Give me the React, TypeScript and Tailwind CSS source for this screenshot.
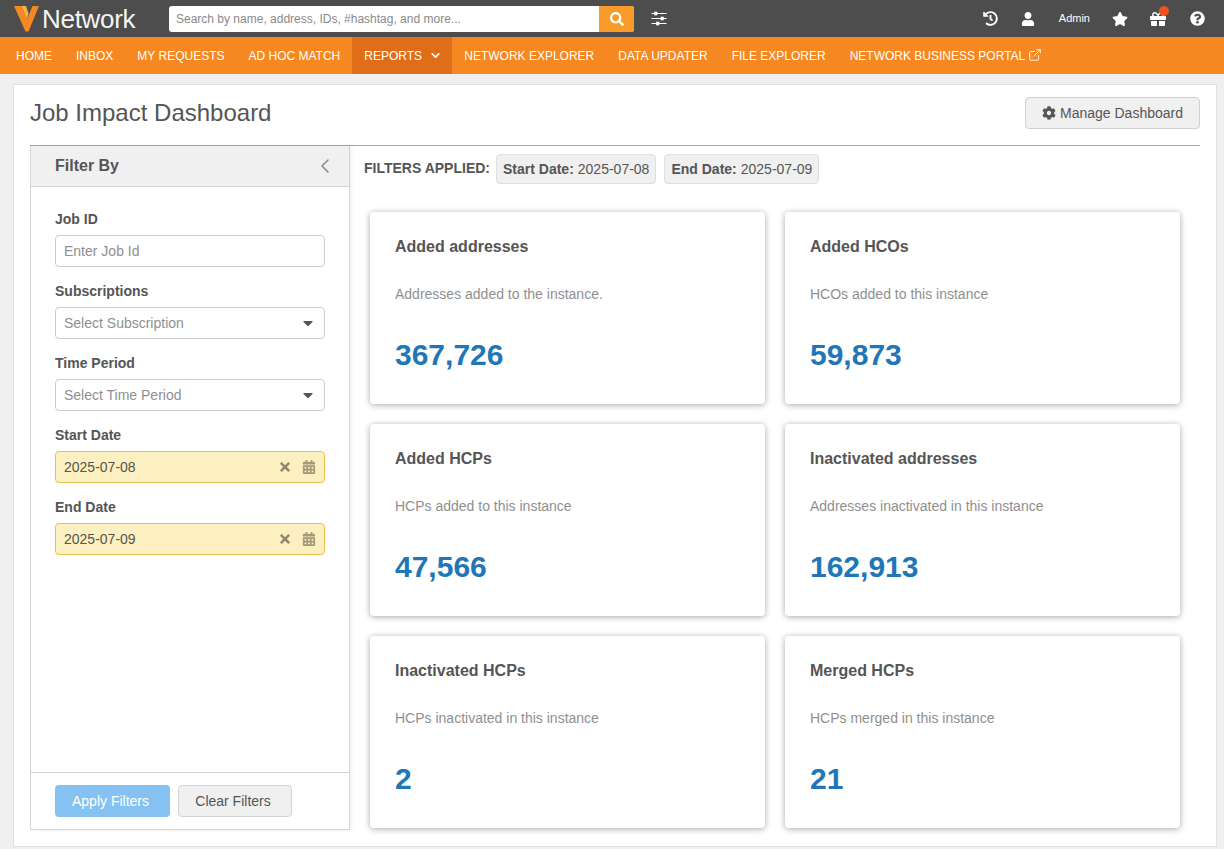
import { ChevronDown, ChevronLeft, ExternalLink } from "lucide-react";
import { FaSearch, FaUser, FaStar, FaGift, FaQuestionCircle, FaHistory, FaCog, FaCalendarAlt, FaTimes, FaCaretDown } from "react-icons/fa";

const nav = ["HOME", "INBOX", "MY REQUESTS", "AD HOC MATCH"];
const nav2 = ["NETWORK EXPLORER", "DATA UPDATER", "FILE EXPLORER"];
const cards = [
  ["Added addresses", "Addresses added to the instance.", "367,726"],
  ["Added HCOs", "HCOs added to this instance", "59,873"],
  ["Added HCPs", "HCPs added to this instance", "47,566"],
  ["Inactivated addresses", "Addresses inactivated in this instance", "162,913"],
  ["Inactivated HCPs", "HCPs inactivated in this instance", "2"],
  ["Merged HCPs", "HCPs merged in this instance", "21"],
];

function Label({ children }: { children: string }) {
  return <div className="mb-[7px] h-[17px] text-[14px] leading-[17px] font-bold text-[#555]">{children}</div>;
}

function SelectBox({ text }: { text: string }) {
  return (
    <div className="mb-[16px] flex h-[32px] w-[270px] items-center justify-between rounded-[4px] border border-[#ccc] bg-white pl-[8px] pr-[8px] text-[14px] text-[#8f8f8f]">
      <span>{text}</span>
      <FaCaretDown className="text-[16px] text-[#555]" />
    </div>
  );
}

function DateBox({ text }: { text: string }) {
  return (
    <div className="mb-[16px] flex h-[32px] w-[270px] items-center rounded-[4px] border border-[#ebbf4e] bg-[#fdf0c0] pl-[8px] pr-[8px] text-[14px] text-[#555]">
      <span className="flex-1">{text}</span>
      <FaTimes className="mr-[10px] text-[14px] text-[#8f8672]" />
      <FaCalendarAlt className="text-[14px] text-[#a39878]" />
    </div>
  );
}

function Chip({ k, v }: { k: string; v: string }) {
  return (
    <div className="flex h-[30px] items-center rounded-[4px] border border-[#e0e0e0] bg-[#f0f0f0] px-[6px] text-[14px] text-[#555]">
      <b className="mr-[4px] font-bold">{k}</b>
      {v}
    </div>
  );
}

export default function App() {
  return (
    <div className="flex h-[849px] w-[1224px] flex-col overflow-hidden bg-[#f0f0f0] font-['Liberation_Sans',Arial,sans-serif] text-[#555]">
      <header className="flex h-[37px] shrink-0 items-center bg-[#4d4d4d] text-white">
        <div className="ml-[14px] flex w-[155px] items-center">
          <svg width="25" height="26" viewBox="0 0 25 26" className="mt-[1px] shrink-0">
            <path d="M0 0H7.5L13 13.5L18.5 0H25L14.5 25.5H11.5Z" fill="#f58820" />
            <path d="M7.5 0H12L14.5 7.5L13 13.5Z" fill="#fbb040" />
          </svg>
          <span className="ml-[3px] text-[26px] leading-none tracking-[-0.3px] text-[#f4f4f4]">Network</span>
        </div>
        <div className="flex h-[26px] w-[465px] items-center rounded-[3px] bg-white">
          <span className="flex-1 pl-[7px] text-[12px] text-[#8a8a8a]">Search by name, address, IDs, #hashtag, and more...</span>
          <div className="flex h-[26px] w-[35px] items-center justify-center rounded-r-[3px] bg-[#f99b2a]">
            <FaSearch className="text-[14px] text-white" />
          </div>
        </div>
        <svg width="16" height="15" viewBox="0 0 16 15" className="ml-[17px]" fill="none" stroke="#fff" strokeWidth="1.2">
          <path d="M0.5 2.5H15.5M0.5 7.5H15.5M0.5 12.5H15.5" />
          <rect x="3.5" y="1" width="2.5" height="3" fill="#fff" strokeWidth="0.6" />
          <rect x="10" y="6" width="2.5" height="3" fill="#fff" strokeWidth="0.6" />
          <rect x="5.5" y="11" width="2.5" height="3" fill="#fff" strokeWidth="0.6" />
        </svg>
        <div className="ml-auto flex items-center">
          <FaHistory className="mr-[23px] text-[15px]" />
          <FaUser className="mr-[24px] text-[14px]" />
          <span className="mr-[22px] text-[11px]">Admin</span>
          <FaStar className="mr-[22px] text-[16px]" />
          <div className="relative mr-[24px]">
            <FaGift className="text-[16px]" />
            <span className="absolute -right-[3px] -top-[5px] h-[10px] w-[10px] rounded-full bg-[#f0521c]" />
          </div>
          <FaQuestionCircle className="mr-[19px] text-[15px]" />
        </div>
      </header>
      <nav className="flex h-[37px] shrink-0 items-center bg-[#f58820] text-[12px] text-white">
        <div className="flex h-full items-center gap-[24px] pl-[16px] pr-[12px]">
          {nav.map((n) => <span key={n}>{n}</span>)}
        </div>
        <div className="flex h-full w-[100px] items-center bg-[#e06e18] pl-[12px]">
          REPORTS
          <ChevronDown className="ml-[7px] h-[13px] w-[13px]" strokeWidth={3} />
        </div>
        <div className="flex h-full items-center gap-[24px] pl-[12px]">
          {nav2.map((n) => <span key={n}>{n}</span>)}
          <span className="flex items-center">
            NETWORK BUSINESS PORTAL
            <ExternalLink className="-mt-[2px] ml-[3px] h-[14px] w-[14px]" strokeWidth={1.6} />
          </span>
        </div>
      </nav>
      <main className="mx-[13px] mt-[10px] flex h-[763px] w-[1204px] flex-col border border-[#e0e0e0] bg-white px-[16px]">
        <div className="flex h-[61px] shrink-0 items-start justify-between border-b border-[#e8983f]">
          <h1 className="mt-[13px] text-[24px] leading-[30px] text-[#555]">Job Impact Dashboard</h1>
          <button className="mt-[12px] flex h-[32px] w-[175px] items-center justify-center rounded-[4px] border border-[#d0d0d0] bg-[#f0f0f0] text-[14px] text-[#555]">
            <FaCog className="mr-[4px] text-[14px]" />
            Manage Dashboard
          </button>
        </div>
        <div className="flex min-h-0 flex-1">
          <aside className="flex h-[684px] w-[320px] shrink-0 flex-col border-x border-b border-[#d4d4d4] bg-white shadow-[2px_0_4px_rgba(0,0,0,0.06)]">
            <div className="flex h-[41px] shrink-0 items-center justify-between border-b border-[#d4d4d4] bg-[#f0f0f0] pl-[24px] pr-[12px]">
              <span className="text-[16px] font-bold">Filter By</span>
              <ChevronLeft className="h-[24px] w-[24px] text-[#888]" strokeWidth={1.5} />
            </div>
            <div className="flex-1 pl-[24px] pt-[24px]">
              <Label>Job ID</Label>
              <div className="mb-[16px] flex h-[32px] w-[270px] items-center rounded-[4px] border border-[#ccc] bg-white pl-[8px] text-[14px] text-[#8f8f8f]">Enter Job Id</div>
              <Label>Subscriptions</Label>
              <SelectBox text="Select Subscription" />
              <Label>Time Period</Label>
              <SelectBox text="Select Time Period" />
              <Label>Start Date</Label>
              <DateBox text="2025-07-08" />
              <Label>End Date</Label>
              <DateBox text="2025-07-09" />
            </div>
            <div className="flex h-[57px] shrink-0 items-start gap-[8px] border-t border-[#d4d4d4] pl-[24px] pt-[12px]">
              <button className="h-[32px] w-[115px] rounded-[4px] bg-[#85c2f2] pr-[4px] text-[14px] text-white">Apply Filters</button>
              <button className="h-[32px] w-[114px] rounded-[4px] border border-[#d4d4d4] bg-[#f0f0f0] pr-[4px] text-[14px] text-[#555]">Clear Filters</button>
            </div>
          </aside>
          <section className="min-w-0 flex-1">
            <div className="flex h-[47px] items-start pl-[14px] pt-[8px]">
              <span className="mr-[6px] mt-[6px] text-[14px] leading-[16px] font-bold">FILTERS APPLIED:</span>
              <Chip k="Start Date:" v="2025-07-08" />
              <div className="w-[8px]" />
              <Chip k="End Date:" v="2025-07-09" />
            </div>
            <div className="grid grid-cols-[395px_395px] gap-x-[20px] gap-y-[20px] pl-[20px] pt-[19px]">
              {cards.map(([t, d, v]) => (
                <div key={t} className="h-[192px] rounded-[4px] bg-white pl-[25px] pt-[25px] shadow-[0_1px_6px_rgba(0,0,0,0.35)]">
                  <div className="text-[16px] leading-[20px] font-bold text-[#555]">{t}</div>
                  <div className="mt-[28px] text-[14px] leading-[18px] text-[#8f8f8f]">{d}</div>
                  <div className="mt-[34px] text-[30px] leading-[36px] font-bold text-[#2176b8]">{v}</div>
                </div>
              ))}
            </div>
          </section>
        </div>
      </main>
    </div>
  );
}
